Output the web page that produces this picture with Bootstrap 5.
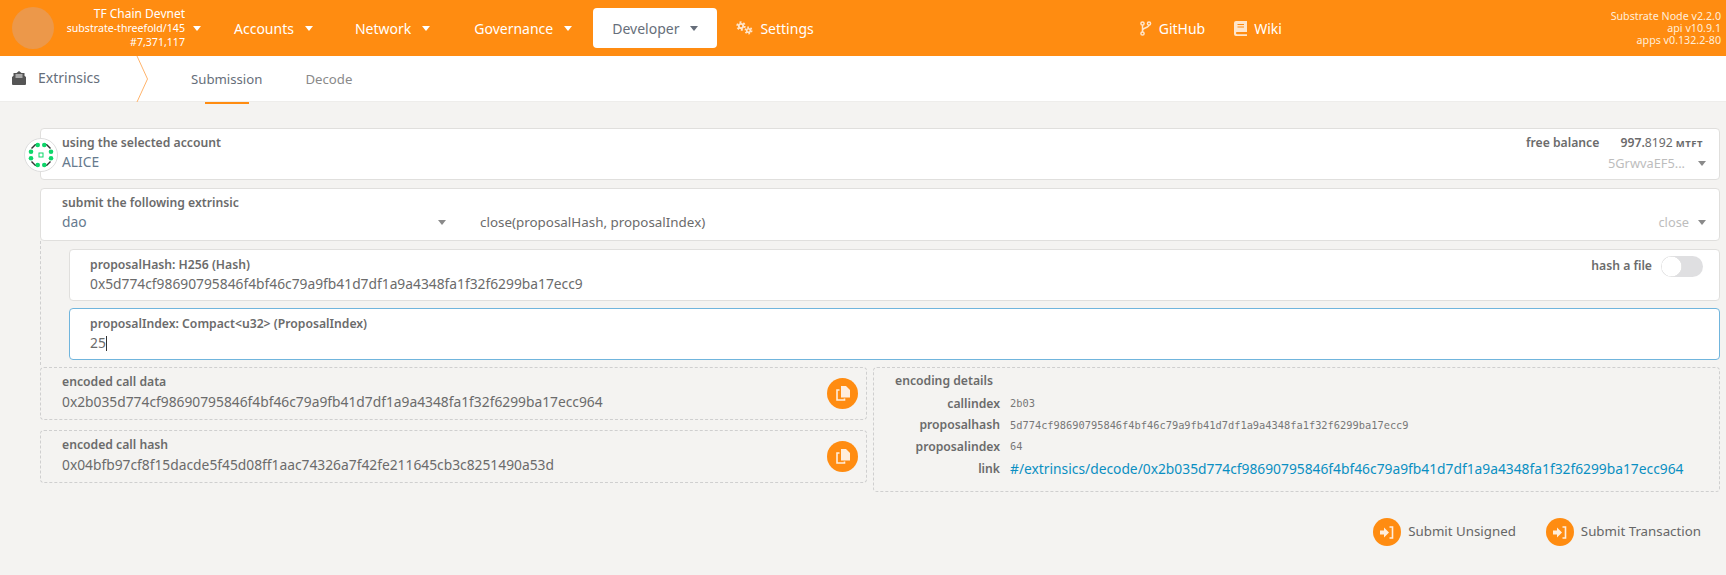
<!DOCTYPE html>
<html lang="en">
<head>
    <meta charset="UTF-8" />
    <title>Extrinsics</title>
    <link href="https://cdn.jsdelivr.net/npm/bootstrap@5.3.2/dist/css/bootstrap.min.css" rel="stylesheet" />
    <style>
        body {
            background-color: #f4f3f1;
            font-family: "Noto Sans", sans-serif;
            font-size: 14px;
            color: #4e4e4e;
            height: 575px;
            overflow: hidden;
        }

        .top-bar {
            background-color: #ff8c11;
            height: 56px;
            color: #fff;
        }

        .chain-logo {
            width: 42px;
            height: 42px;
            background-color: #ec984a;
            margin-left: 12px;
        }

        .chain-info {
            width: 147px;
            font-size: 10.6px;
            line-height: 14px;
            margin-right: 14px;
        }

        .chain-info .chain-name {
            font-size: 12px;
        }

        .top-item {
            font-size: 14px;
            color: #fff;
            text-decoration: none;
            height: 40px;
            padding: 0 19px;
            margin-right: 4px;
            border-radius: 4px;
            gap: 11px;
        }

        .top-item.is-active {
            background-color: #fff;
            color: #666e7a;
        }

        .top-item.item-governance {
            padding-left: 21px;
            padding-right: 17px;
        }

        .top-item.item-settings {
            gap: 7px;
            margin-left: -4px;
        }

        .caret-down {
            display: inline-block;
            width: 0;
            height: 0;
            border-left: 4.5px solid transparent;
            border-right: 4.5px solid transparent;
            border-top: 5px solid currentColor;
        }

        .top-link {
            font-size: 14px;
            color: #fff;
            text-decoration: none;
            gap: 7px;
        }

        .link-github {
            margin-left: 303px;
        }

        .link-wiki {
            margin-left: 29px;
        }

        .node-info {
            font-size: 10.7px;
            line-height: 12px;
            color: #ffeeda;
            margin-right: 5px;
        }

        .sub-bar {
            background-color: #fff;
            height: 46px;
            border-bottom: 1px solid #eeedeb;
        }

        .sub-title {
            width: 136px;
            padding-left: 12px;
            padding-bottom: 2px;
            color: #666e7a;
            font-size: 14px;
            gap: 12px;
        }

        .sub-arrow {
            width: 16px;
            height: 46px;
        }

        .sub-tab {
            color: #8a8a8a;
            text-decoration: none;
            font-size: 13.2px;
            height: 46px;
            line-height: 46px;
        }

        .sub-tab.is-active {
            color: #666e7a;
            margin-left: 39px;
            margin-right: 43px;
            position: relative;
        }

        .sub-tab.is-active::after {
            content: "";
            position: absolute;
            left: 14px;
            bottom: -2px;
            width: 44px;
            height: 2px;
            background-color: #ff8c11;
        }

        .main-area {
            padding: 26px 6px 0 40px;
        }

        .input-box {
            background-color: #fff;
            border: 1px solid #e0dfdd;
            border-radius: 4px;
            padding: 7px 13px 0 21px;
            height: 53px;
            margin-bottom: 8px;
        }

        .input-box.account-box {
            height: 52px;
        }

        .input-box.is-focused {
            border-color: #70b5dd;
        }

        .field-label {
            font-size: 12.2px;
            font-weight: 600;
            color: #6b6b6b;
            line-height: 16px;
            white-space: nowrap;
        }

        .input-box .field-label {
            line-height: 14px;
        }

        .field-value {
            font-size: 13.8px;
            line-height: 24px;
            color: #6b6b6b;
            white-space: nowrap;
        }

        .field-blue {
            color: #667a8e;
        }

        .muted-value {
            color: #bdbdbd;
            font-size: 12.8px;
            line-height: 24px;
        }

        .small-caret {
            color: #8a8a8a;
        }

        .unit-text {
            font-size: 9.5px;
            font-weight: 700;
            letter-spacing: .5px;
        }

        .balance-row {
            padding-right: 3px;
        }

        .balance-amount {
            margin-left: 18px;
        }

        .address-caret {
            margin-left: 13px;
        }

        .method-caret {
            margin-left: 9px;
        }

        .avatar-ring {
            position: absolute;
            left: -17px;
            top: 9px;
            width: 34px;
            height: 34px;
        }

        .section-col {
            width: 384px;
        }

        .method-col {
            margin-left: 34px;
            font-size: 13.4px;
        }

        .param-list {
            border-left: 1px dashed #cfcfcf;
            margin-top: -8px;
            padding: 8px 0 5px 28px;
        }

        .param-list .input-box {
            height: 52px;
            padding-top: 8px;
            padding-left: 20px;
            margin-bottom: 7px;
        }

        .param-list .input-box:last-child {
            margin-bottom: 0;
        }

        .text-cursor {
            display: inline-block;
            width: 1px;
            height: 15px;
            background-color: #333;
            vertical-align: -3px;
        }

        .hash-toggle {
            gap: 9px;
            margin-top: -2px;
            padding-right: 3px;
        }

        .hash-toggle .field-label {
            padding-top: 3px;
        }

        .form-switch .hash-switch {
            width: 42px;
            height: 21px;
            background-color: #dfdfe1;
            background-image: radial-gradient(circle at 10.5px 50%, #fff 9.5px, #e4e4e4 10px, transparent 10.5px);
            background-position: 0 0;
            background-size: 100% 100%;
            border: none;
            margin: 0;
        }

        .out-row {
            margin-top: 2px;
        }

        .dash-box {
            border: 1px dashed #cfcfcf;
            border-radius: 4px;
            padding: 6px 8px 6px 21px;
        }

        .out-left {
            width: 827px;
        }

        .out-right {
            width: 847px;
            height: 125px;
            margin-left: 6px;
            padding-top: 5px;
        }

        .out-box {
            height: 53px;
            margin-bottom: 10px;
        }

        .copy-btn {
            width: 31px;
            height: 31px;
            background-color: #ff8c11;
        }

        .detail-row {
            height: 21.7px;
        }

        .detail-key {
            width: 105px;
            text-align: right;
            margin-right: 10px;
            font-size: 12.2px;
            font-weight: 600;
            color: #6b6b6b;
        }

        .detail-mono {
            font-family: "DejaVu Sans Mono", monospace;
            font-size: 10.35px;
            color: #777;
        }

        .detail-link {
            color: #0a8fc2;
            text-decoration: none;
            font-size: 13.8px;
        }

        .action-row {
            gap: 30px;
            margin-top: 25px;
            padding-right: 19px;
        }

        .action-btn {
            color: #666;
            font-size: 13.3px;
            gap: 7px;
        }

        .action-icon {
            width: 28px;
            height: 28px;
            background-color: #ff8c11;
        }
    </style>
</head>
<body>
    <!-- Top bar -->
    <nav class="top-bar d-flex align-items-center">
        <div class="chain-logo rounded-circle flex-shrink-0"></div>
        <div class="chain-info d-flex align-items-center flex-shrink-0">
            <div class="flex-grow-1 text-end">
                <div class="chain-name">TF Chain Devnet</div>
                <div>substrate-threefold/145</div>
                <div>#7,371,117</div>
            </div>
            <span class="caret-down ms-2"></span>
        </div>
        <a class="top-item d-flex align-items-center" href="#">Accounts <span class="caret-down"></span></a>
        <a class="top-item d-flex align-items-center" href="#">Network <span class="caret-down"></span></a>
        <a class="top-item item-governance d-flex align-items-center" href="#">Governance <span class="caret-down"></span></a>
        <a class="top-item is-active d-flex align-items-center" href="#">Developer <span class="caret-down"></span></a>
        <a class="top-item item-settings d-flex align-items-center" href="#">
            <svg width="17" height="14" viewBox="0 0 17 14" fill="none" stroke="#ffe6cc">
                <circle cx="5" cy="5" r="2.2" stroke-width="1.8"/>
                <circle cx="5" cy="5" r="3.8" stroke-width="1.8" stroke-dasharray="2 1.98"/>
                <circle cx="12.5" cy="9.5" r="1.8" stroke-width="1.6"/>
                <circle cx="12.5" cy="9.5" r="3.2" stroke-width="1.6" stroke-dasharray="1.68 1.68"/>
            </svg>
            Settings
        </a>
        <a class="top-link link-github d-flex align-items-center" href="#">
            <svg width="12" height="15" viewBox="0 0 12 15" fill="none" stroke="#ffe6cc" stroke-width="1.5"><circle cx="2.5" cy="2.5" r="1.6"/><circle cx="2.5" cy="12.5" r="1.6"/><circle cx="9" cy="2.5" r="1.6"/><path d="M2.5 4v7M9 4c0 3-6.5 2.5-6.5 5.5"/></svg>
            GitHub
        </a>
        <a class="top-link link-wiki d-flex align-items-center" href="#">
            <svg width="13" height="15" viewBox="0 0 13 15"><path fill="#ffe6cc" d="M2 0h11v11H3a1 1 0 0 0 0 2.2h10V15H2a2 2 0 0 1-2-2V2a2 2 0 0 1 2-2z"/><path fill="#ff8c11" d="M3.5 3H10v1H3.500zM3.5 5.5H10v1H3.500z"/></svg>
            Wiki
        </a>
        <div class="node-info text-end ms-auto">
            <div>Substrate Node v2.2.0</div>
            <div>api v10.9.1</div>
            <div>apps v0.132.2-80</div>
        </div>
    </nav>

    <!-- Sub header -->
    <div class="sub-bar d-flex align-items-center">
        <div class="sub-title d-flex align-items-center">
            <svg width="14" height="14" viewBox="0 0 14 14"><path fill="#555" d="M7 0 9.500 2H12.500v2.800L14 6v7a1 1 0 0 1-1 1H1a1 1 0 0 1-1-1V6l1.500-1.200V2H4.500z"/><path fill="#fff" d="M3.500 3.500h7v1h-7zM3.500 5.500h7v1h-7z"/></svg>
            Extrinsics
        </div>
        <svg class="sub-arrow flex-shrink-0" viewBox="0 0 16 46" fill="none" stroke="#ffb36b"><path d="M1 0 11.500 23 1 46"/></svg>
        <a class="sub-tab is-active" href="#">Submission</a>
        <a class="sub-tab" href="#">Decode</a>
    </div>

    <div class="main-area">
        <!-- Account -->
        <div class="input-box account-box position-relative d-flex justify-content-between">
            <svg class="avatar-ring" viewBox="0 0 34 34">
                <circle cx="17" cy="17" r="16.5" fill="#fff" stroke="#ddd"/>
                <path fill="#333" d="M7 10 11 6h2L8 11zM21 6h2l4 4-1 1zM7 24l1-1 5 5h-2zM26 23l1 1-4 4h-2z"/>
                <g fill="#0ed66a">
                    <circle cx="13.7" cy="7" r="2.3"/><circle cx="20.3" cy="7" r="2.3"/>
                    <circle cx="7" cy="13.7" r="2.3"/><circle cx="27" cy="13.7" r="2.3"/>
                    <circle cx="7" cy="20.3" r="2.3"/><circle cx="27" cy="20.3" r="2.3"/>
                    <circle cx="13.7" cy="27" r="2.3"/><circle cx="20.3" cy="27" r="2.3"/>
                </g>
                <rect x="15" y="15" width="4" height="4" fill="none" stroke="#0ed66a"/>
            </svg>
            <div>
                <div class="field-label">using the selected account</div>
                <div class="field-value field-blue">ALICE</div>
            </div>
            <div class="text-end">
                <div class="field-label balance-row">free balance <span class="balance-amount">997.</span><span class="fw-normal">8192</span> <span class="unit-text">MTFT</span></div>
                <div class="muted-value d-flex align-items-center justify-content-end"><span>5GrwvaEF5...</span><span class="caret-down small-caret address-caret"></span></div>
            </div>
        </div>

        <!-- Extrinsic -->
        <div class="input-box">
            <div class="field-label">submit the following extrinsic</div>
            <div class="d-flex align-items-center">
                <div class="section-col field-value field-blue d-flex align-items-center justify-content-between">dao <span class="caret-down small-caret"></span></div>
                <div class="method-col field-value flex-grow-1">close(proposalHash, proposalIndex)</div>
                <div class="muted-value d-flex align-items-center"><span>close</span><span class="caret-down small-caret method-caret"></span></div>
            </div>
        </div>

        <!-- Params -->
        <div class="param-list">
            <div class="input-box d-flex justify-content-between">
                <div>
                    <div class="field-label">proposalHash: H256 (Hash)</div>
                    <div class="field-value">0x5d774cf98690795846f4bf46c79a9fb41d7df1a9a4348fa1f32f6299ba17ecc9</div>
                </div>
                <div class="hash-toggle d-flex align-items-start">
                    <div class="field-label">hash a file</div>
                    <div class="form-check form-switch m-0 p-0 d-flex"><input class="form-check-input hash-switch" type="checkbox" role="switch" /></div>
                </div>
            </div>
            <div class="input-box is-focused">
                <div class="field-label">proposalIndex: Compact&lt;u32&gt; (ProposalIndex)</div>
                <div class="field-value">25<span class="text-cursor"></span></div>
            </div>
        </div>

        <!-- Output -->
        <div class="out-row d-flex">
            <div class="out-left">
                <div class="dash-box out-box d-flex justify-content-between align-items-center">
                    <div>
                        <div class="field-label">encoded call data</div>
                        <div class="field-value">0x2b035d774cf98690795846f4bf46c79a9fb41d7df1a9a4348fa1f32f6299ba17ecc964</div>
                    </div>
                    <div class="copy-btn rounded-circle d-flex align-items-center justify-content-center">
                        <svg width="14" height="15" viewBox="0 0 14 15"><path fill="#ffeedd" d="M5 0h5l4 4v7.500H5z"/><path fill="none" stroke="#ffeedd" stroke-width="1.6" d="M3.500 4H1v10h7.500v-1.500"/></svg>
                    </div>
                </div>
                <div class="dash-box out-box d-flex justify-content-between align-items-center">
                    <div>
                        <div class="field-label">encoded call hash</div>
                        <div class="field-value">0x04bfb97cf8f15dacde5f45d08ff1aac74326a7f42fe211645cb3c8251490a53d</div>
                    </div>
                    <div class="copy-btn rounded-circle d-flex align-items-center justify-content-center">
                        <svg width="14" height="15" viewBox="0 0 14 15"><path fill="#ffeedd" d="M5 0h5l4 4v7.500H5z"/><path fill="none" stroke="#ffeedd" stroke-width="1.6" d="M3.500 4H1v10h7.500v-1.500"/></svg>
                    </div>
                </div>
            </div>
            <div class="dash-box out-right">
                <div class="field-label mb-1">encoding details</div>
                <div class="detail-row d-flex align-items-center"><div class="detail-key">callindex</div><div class="detail-mono">2b03</div></div>
                <div class="detail-row d-flex align-items-center"><div class="detail-key">proposalhash</div><div class="detail-mono">5d774cf98690795846f4bf46c79a9fb41d7df1a9a4348fa1f32f6299ba17ecc9</div></div>
                <div class="detail-row d-flex align-items-center"><div class="detail-key">proposalindex</div><div class="detail-mono">64</div></div>
                <div class="detail-row d-flex align-items-center"><div class="detail-key">link</div><a class="detail-link" href="#">#/extrinsics/decode/0x2b035d774cf98690795846f4bf46c79a9fb41d7df1a9a4348fa1f32f6299ba17ecc964</a></div>
            </div>
        </div>

        <!-- Actions -->
        <div class="action-row d-flex justify-content-end">
            <div class="action-btn d-flex align-items-center">
                <span class="action-icon rounded-circle d-flex align-items-center justify-content-center"><svg width="14" height="13" viewBox="0 0 14 13"><path fill="#ffeedd" d="M0 4.500h4V1.500l5 5-5 5V8.500H0z"/><path fill="none" stroke="#ffeedd" stroke-width="1.6" d="M9.500 1h3v11h-3"/></svg></span>
                Submit Unsigned
            </div>
            <div class="action-btn d-flex align-items-center">
                <span class="action-icon rounded-circle d-flex align-items-center justify-content-center"><svg width="14" height="13" viewBox="0 0 14 13"><path fill="#ffeedd" d="M0 4.500h4V1.500l5 5-5 5V8.500H0z"/><path fill="none" stroke="#ffeedd" stroke-width="1.6" d="M9.500 1h3v11h-3"/></svg></span>
                Submit Transaction
            </div>
        </div>
    </div>

    <script src="https://cdn.jsdelivr.net/npm/bootstrap@5.3.2/dist/js/bootstrap.bundle.min.js"></script>
</body>
</html>
